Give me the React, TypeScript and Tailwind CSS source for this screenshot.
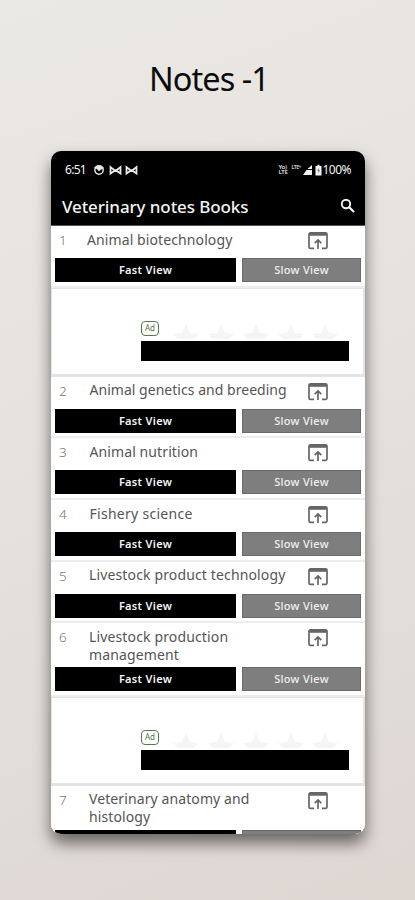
import React from "react";

type Book = { n: number; lines: string[]; tracking: string; indent: string };

const books: Book[] = [
  { n: 1, lines: ["Animal biotechnology"], tracking: "tracking-[0.1px]", indent: "pl-[23px]" },
  { n: 2, lines: ["Animal genetics and breeding"], tracking: "tracking-[0.03px]", indent: "pl-[25.5px]" },
  { n: 3, lines: ["Animal nutrition"], tracking: "tracking-[0.1px]", indent: "pl-[25.5px]" },
  { n: 4, lines: ["Fishery science"], tracking: "tracking-[0.28px]", indent: "pl-[25.5px]" },
  { n: 5, lines: ["Livestock product technology"], tracking: "tracking-[0.14px]", indent: "pl-[25px]" },
  { n: 6, lines: ["Livestock production", "management"], tracking: "tracking-[0.14px]", indent: "pl-[25px]" },
  { n: 7, lines: ["Veterinary anatomy and", "histology"], tracking: "tracking-[0.1px]", indent: "pl-[25px]" },
];

function OpenIcon() {
  return (
    <svg className="mt-[6px] h-[18px] w-5 shrink-0" viewBox="0 0 20 18" fill="none" stroke="#666" strokeWidth="1.7">
      <path d="M6 16.3H2.400a1.400 1.400 0 0 1-1.400-1.400V2.300A1.400 1.400 0 0 1 2.400.9h15.200A1.400 1.400 0 0 1 19 2.300v12.600a1.400 1.400 0 0 1-1.400 1.400H14" />
      <path d="M1 2.400h18" strokeWidth="2.800" />
      <path d="M10 17V8.300M6.700 11.200 10 7.900l3.300 3.300" />
    </svg>
  );
}

function Row({ book, last = false }: { book: Book; last?: boolean }) {
  const two = book.lines.length > 1;
  return (
    <section className={`shrink-0 border-b-2 border-[#ededed] bg-white px-[4px] ${two ? "h-[73.5px]" : "h-[61.7px]"}`}>
      <div className={`flex ${two ? "h-[44px]" : "h-[32px]"}`}>
        <span className="w-[9px] shrink-0 pl-[4px] pt-[5px] text-[13.5px] font-light leading-[18px] text-[#777]">{book.n}</span>
        <h2 className={`w-[244px] shrink-0 whitespace-nowrap pt-[4.5px] text-[14px] leading-[18px] text-[#555] ${book.indent} ${book.tracking}`}>
          {book.lines.map((l) => (
            <div key={l}>{l}</div>
          ))}
        </h2>
        <OpenIcon />
      </div>
      <div className="flex gap-[6px] text-[11px] tracking-[0.3px]">
        <button className="h-6 w-[181px] bg-black font-semibold leading-6 text-[#f5f5f5]">{last ? null : "Fast View"}</button>
        <button className="h-6 w-[119px] border border-[#6a6a6a] bg-[#7e7e7e] font-medium leading-[22px] text-[#f0f0f0]">{last ? null : "Slow View"}</button>
      </div>
    </section>
  );
}

function Ad() {
  return (
    <section className="h-[89px] shrink-0 border border-b-[3px] border-r-2 border-[#e4e4e4] bg-white pl-[89px] pt-[32.3px]">
      <div className="flex h-[20px] items-end">
        <span className="mb-[5px] h-[15px] w-[18px] rounded-[4px] border-[1.5px] border-[#557a4c] text-center text-[8px] leading-[12px] text-[#4f7548]">Ad</span>
        <svg className="ml-[12px] h-[17px] w-[182px]" viewBox="0 0 182 17" fill="#f5f5f5">
          {[15, 50, 85, 120, 154].map((x) => (
            <path key={x} transform={`translate(${x} 0)`} d="M0 0 4 9l9 1-5 5H-8l-5-5 9-1z" />
          ))}
        </svg>
      </div>
      <div className="h-5 w-[208px] bg-black" />
    </section>
  );
}

function StatusBar() {
  return (
    <div className="flex h-[37px] items-center px-[14px] text-[12px] text-[#f4f4f4]">
      <span className="tracking-[-0.7px]">6:51</span>
      <svg className="ml-[7px] h-[12px] w-[46px]" viewBox="0 0 46 12" fill="none" stroke="#e8e8e8">
        <circle cx="6" cy="6" r="4.200" strokeWidth="1.400" />
        <path d="M1.500 3.500 4 2h4l2.800 2-3 1.500L6 7 4 5z" fill="#e8e8e8" strokeWidth=".6" />
        <path d="M17.500 9.500V3l5 4 5-4v6.500l-5-3.500zM33.500 9.500V3l5 4 5-4v6.500l-5-3.500z" strokeWidth="1.800" />
      </svg>
      <span className="ml-auto flex items-center">
        <span className="mr-[2px] flex w-[11px] flex-col text-[6px] font-bold leading-[5px] tracking-[-0.3px] text-[#ccc]">
          <span>Yo)</span>
          <span>LTE</span>
        </span>
        <span className="mb-[6px] mr-[1px] w-[11px] text-[5px] font-bold leading-[6px] tracking-[-0.4px] text-[#ccc]">LTE+</span>
        <svg className="h-[12px] w-[19px]" viewBox="0 0 19 12" fill="#f4f4f4">
          <path d="M9 1v4H4.500zM3.500 6H9v5H0zM12.500 2h2V.7h2V2h2v9.500h-6z" />
          <path d="M15.700 3.500 14.200 7h1.200v2.500L17 6h-1.300z" fill="#777" />
        </svg>
        <span className="tracking-[-0.5px]">100%</span>
      </span>
    </div>
  );
}

export default function App() {
  return (
    <main className="flex h-[900px] w-[415px] flex-col items-center overflow-hidden bg-linear-160 from-[#ebe9e5] via-[#e5e1dd] to-[#ded7d2] font-['Noto_Sans',sans-serif]">
      <h1 className="h-[151px] shrink-0 whitespace-nowrap pl-[3px] pt-[57px] text-[32.5px] leading-[44px] tracking-[-0.95px] text-[#0c0c0c]">Notes -1</h1>
      <div className="ml-[1px] flex h-[683px] w-[314px] shrink-0 flex-col overflow-hidden rounded-[10px] bg-white shadow-[0_9px_16px_rgba(0,0,0,0.55)]">
        <header className="h-[75px] shrink-0 border-b border-[#555] bg-black">
          <StatusBar />
          <div className="flex h-[37px] items-center justify-between pl-[11px] pr-[10px]">
            <span className="whitespace-nowrap text-[17px] font-medium tracking-[-0.1px] text-[#f4f4f4]">Veterinary notes Books</span>
            <svg className="mb-[2px] h-[15px] w-[15px]" viewBox="0 0 15 15" fill="none" stroke="#f4f4f4" strokeWidth="1.900">
              <circle cx="6" cy="6" r="4.200" />
              <path d="m9 9 5 5" strokeWidth="2.200" />
            </svg>
          </div>
        </header>
        <Row book={books[0]} />
        <Ad />
        {books.slice(1, 6).map((b) => (
          <Row key={b.n} book={b} />
        ))}
        <Ad />
        <Row book={books[6]} last />
      </div>
    </main>
  );
}
